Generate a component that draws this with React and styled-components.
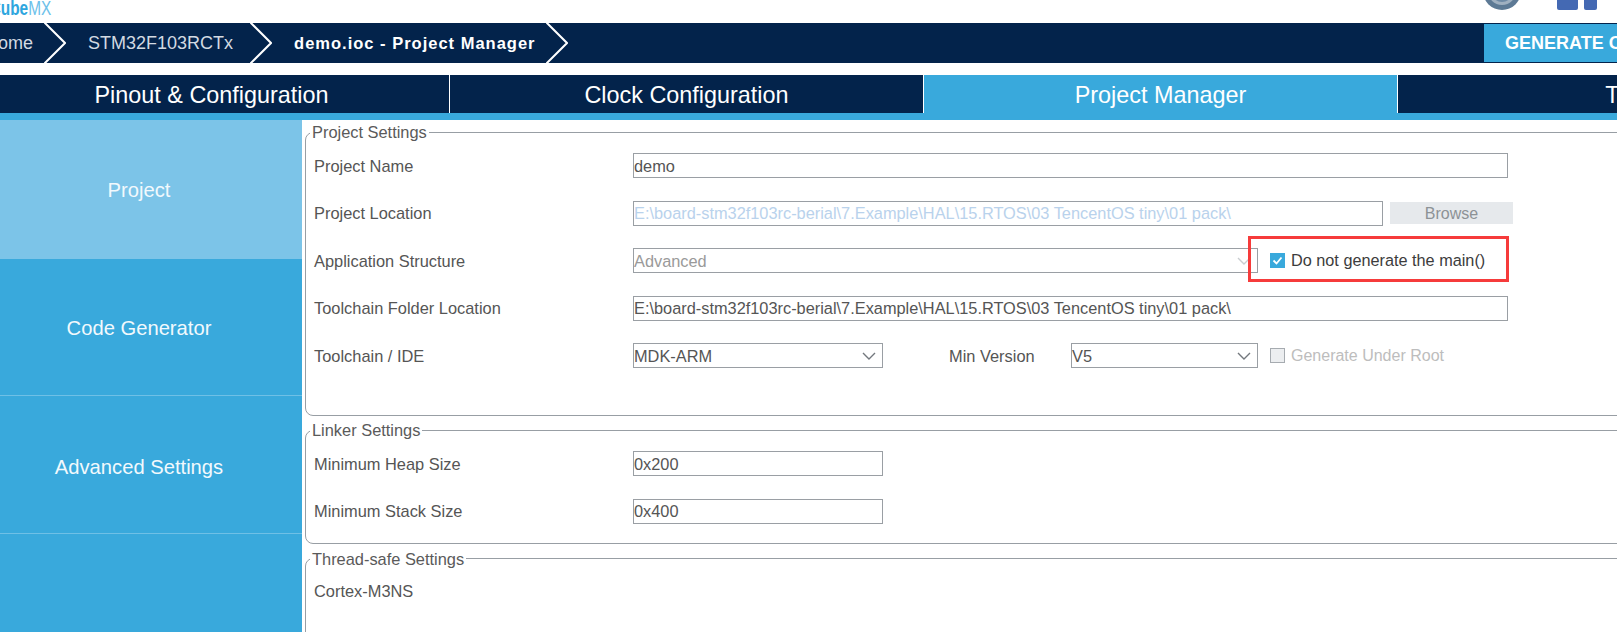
import React from 'react'
import styled, { createGlobalStyle } from 'styled-components'

const Global = createGlobalStyle`
  html, body {
    margin: 0;
    padding: 0;
    background: #fff;
    overflow: hidden;
  }
  body {
    font-family: "Liberation Sans", Arial, sans-serif;
  }
`

const Page = styled.div`
  width: 1617px;
  height: 632px;
  overflow: hidden;
  display: flex;
  flex-direction: column;
`

const TopBand = styled.div`
  height: 23px;
  display: flex;
  justify-content: space-between;
  align-items: flex-start;
  flex-shrink: 0;
`

const Logo = styled.div`
  font-size: 20px;
  line-height: 17px;
  color: #6cc1ea;
  white-space: nowrap;
  margin-left: -60px;
  transform: scaleX(0.77);
  transform-origin: left center;

  b {
    color: #2ea6de;
  }
`

const Marks = styled.div`
  display: flex;
  gap: 36px;
  margin-right: 20px;
`

const CrumbBar = styled.div`
  height: 40px;
  background: #03234b;
  display: flex;
  align-items: center;
  flex-shrink: 0;
  overflow: hidden;
`

const Crumb = styled.div`
  display: flex;
  align-items: center;
  height: 40px;
  flex-shrink: 0;
  color: ${p => (p.$current ? '#fff' : '#d3dae2')};
  font-size: ${p => (p.$current ? '16.5px' : '18px')};
  font-weight: ${p => (p.$current ? 700 : 400)};
  letter-spacing: ${p => (p.$current ? '1px' : '0')};
  margin-left: ${p => p.$offset || 0}px;

  span {
    margin-right: ${p => p.$after}px;
    margin-left: 22px;
    white-space: nowrap;
  }
`

const Generate = styled.div`
  margin-left: auto;
  width: 112px;
  height: 38px;
  padding-left: 21px;
  flex-shrink: 0;
  background: #39a9dc;
  color: #fff;
  font-size: 18px;
  font-weight: 700;
  line-height: 38px;
  white-space: nowrap;
  overflow: hidden;
`

const TabBar = styled.div`
  margin-top: 12px;
  margin-left: -26px;
  display: flex;
  flex-shrink: 0;
  background: #39a9dc;
  padding-bottom: 7px;
`

const Tab = styled.div`
  width: ${p => p.$width || 474}px;
  height: 38px;
  flex-shrink: 0;
  box-sizing: border-box;
  border-right: 1px solid #fff;
  background: ${p => (p.$active ? '#39a9dc' : '#03234b')};
  color: #fff;
  font-size: 23.4px;
  line-height: 40px;
  text-align: center;
`

const Main = styled.div`
  flex: 1;
  display: flex;
  min-height: 0;
`

const Sidebar = styled.div`
  width: 326px;
  margin-left: -24px;
  flex-shrink: 0;
  background: #39a9dc;
`

const SideItem = styled.div`
  height: ${p => p.$height}px;
  box-sizing: border-box;
  padding-top: ${p => p.$nudge || 2}px;
  display: flex;
  align-items: center;
  justify-content: center;
  background: ${p => (p.$active ? '#7cc4e8' : 'transparent')};
  border-top: ${p => (p.$line ? '1px solid #6fc0e6' : 'none')};
  color: #f2f9fd;
  font-size: 20.2px;
`

const Content = styled.div`
  flex: 1;
  min-width: 0;
  padding-left: 3px;
  overflow: hidden;
`

const Group = styled.fieldset`
  margin: ${p => p.$top}px -20px 0 0;
  padding: ${p => p.$padTop}px 0 ${p => p.$padBottom}px 8px;
  border: 1px solid #989ea4;
  border-radius: 8px 0 0 8px;
  min-width: 0;

  legend {
    margin-left: -4px;
    padding: 0 2px;
    font-size: 16.4px;
    line-height: 16px;
    color: #5a5a5a;
  }
`

const Row = styled.div`
  display: flex;
  align-items: center;
  height: 25px;
  margin-bottom: ${p => (p.$last ? 0 : 22.5)}px;
`

const Label = styled.div`
  width: ${p => p.$width || 319}px;
  margin-left: ${p => p.$offset || 0}px;
  padding-top: 1px;
  flex-shrink: 0;
  font-size: 16.4px;
  color: #555;
  white-space: nowrap;
`

const Field = styled.div`
  width: ${p => p.$width}px;
  height: 25px;
  box-sizing: border-box;
  flex-shrink: 0;
  display: flex;
  align-items: center;
  justify-content: space-between;
  padding: 1px 6px 0 0;
  border: 1px solid #9a9fa4;
  background: #fff;
  font-size: 16.35px;
  color: ${p => p.$tone || '#555'};
  white-space: nowrap;
  overflow: hidden;
`

const Browse = styled.div`
  width: 123px;
  height: 22px;
  margin-left: 7px;
  background: #e6e9ec;
  color: #8d9296;
  font-size: 16px;
  line-height: 23px;
  text-align: center;
`

const CheckItem = styled.div`
  position: relative;
  display: flex;
  align-items: center;
  gap: 6px;
  margin-left: 12px;
  font-size: ${p => (p.$disabled ? '16px' : '16.25px')};
  color: ${p => (p.$disabled ? '#bdbdbd' : '#3c3c3c')};
  white-space: nowrap;
`

const Box = styled.div`
  width: 15px;
  height: 15px;
  box-sizing: border-box;
  display: flex;
  align-items: center;
  justify-content: center;
  background: ${p => (p.$checked ? '#39a9dc' : '#eceef0')};
  border: ${p => (p.$checked ? 'none' : '1px solid #a6abb0')};
`

// annotation someone drew on the screenshot
const RedMark = styled.div`
  position: absolute;
  left: -22px;
  top: -15px;
  width: 261px;
  height: 46px;
  box-sizing: border-box;
  border: 3px solid #f63b3b;
  pointer-events: none;
`

const Chevron = () => (
  <svg width="22" height="40" viewBox="0 0 22 40" style={{ flexShrink: 0 }}>
    <polyline points="0,-1 21,20 0,41" fill="none" stroke="#fff" strokeWidth="2" />
  </svg>
)

const Caret = ({ color = '#73787d' }) => (
  <svg width="14" height="8" viewBox="0 0 14 8">
    <polyline points="1,1 7,7 13,1" fill="none" stroke={color} strokeWidth="1.4" />
  </svg>
)

const Tick = () => (
  <svg width="15" height="15" viewBox="0 0 15 15">
    <polyline points="3.5,7.5 6.5,10.5 11.5,4.5" fill="none" stroke="#fff" strokeWidth="1.8" />
  </svg>
)

const Badge = () => (
  <svg width="38" height="11" viewBox="0 0 38 11">
    <circle cx="19" cy="-9" r="19" fill="#5d7a95" />
    <circle cx="19" cy="-9" r="14" fill="#9fb0c0" />
    <circle cx="19" cy="-9" r="11" fill="#6d8aa5" />
  </svg>
)

const Facebook = () => (
  <svg width="40" height="11" viewBox="0 0 40 11">
    <path d="M0 0H21V8a2 2 0 0 1-2 2H2a2 2 0 0 1-2-2Z" fill="#4469b3" />
    <path d="M27 0H40V8a2 2 0 0 1-2 2H29a2 2 0 0 1-2-2Z" fill="#4469b3" />
  </svg>
)

export default function App() {
  return (
    <Page>
      <Global />
      <TopBand>
        <Logo><b>STM32Cube</b>MX</Logo>
        <Marks>
          <Badge />
          <Facebook />
        </Marks>
      </TopBand>

      <CrumbBar>
        <Crumb $offset={-37} $after={11}><span>Home</span><Chevron /></Crumb>
        <Crumb $after={17}><span>STM32F103RCTx</span><Chevron /></Crumb>
        <Crumb $current $after={10}><span>demo.ioc - Project Manager</span><Chevron /></Crumb>
        <Generate>GENERATE CODE</Generate>
      </CrumbBar>

      <TabBar>
        <Tab $width={476}>Pinout &amp; Configuration</Tab>
        <Tab>Clock Configuration</Tab>
        <Tab $active>Project Manager</Tab>
        <Tab $width={470}>Tools</Tab>
      </TabBar>

      <Main>
        <Sidebar>
          <SideItem $height={139} $active>Project</SideItem>
          <SideItem $height={136}>Code Generator</SideItem>
          <SideItem $height={138} $line $nudge={6}>Advanced Settings</SideItem>
          <SideItem $height={99} $line />
        </Sidebar>

        <Content>
          <Group $top={4} $padTop={13} $padBottom={47}>
            <legend>Project Settings</legend>
            <Row>
              <Label>Project Name</Label>
              <Field $width={875}>demo</Field>
            </Row>
            <Row>
              <Label>Project Location</Label>
              <Field $width={750} $tone="#b9d2ec">E:\board-stm32f103rc-berial\7.Example\HAL\15.RTOS\03 TencentOS tiny\01 pack\</Field>
              <Browse>Browse</Browse>
            </Row>
            <Row>
              <Label>Application Structure</Label>
              <Field $width={625} $tone="#9a9a9a">Advanced<Caret color="#c9cdd0" /></Field>
              <CheckItem>
                <RedMark />
                <Box $checked><Tick /></Box>
                Do not generate the main()
              </CheckItem>
            </Row>
            <Row>
              <Label>Toolchain Folder Location</Label>
              <Field $width={875}>E:\board-stm32f103rc-berial\7.Example\HAL\15.RTOS\03 TencentOS tiny\01 pack\</Field>
            </Row>
            <Row $last>
              <Label>Toolchain / IDE</Label>
              <Field $width={250}>MDK-ARM<Caret /></Field>
              <Label $width={122} $offset={66}>Min Version</Label>
              <Field $width={187}>V5<Caret /></Field>
              <CheckItem $disabled>
                <Box />
                Generate Under Root
              </CheckItem>
            </Row>
          </Group>

          <Group $top={6} $padTop={13} $padBottom={19}>
            <legend>Linker Settings</legend>
            <Row>
              <Label>Minimum Heap Size</Label>
              <Field $width={250}>0x200</Field>
            </Row>
            <Row $last>
              <Label>Minimum Stack Size</Label>
              <Field $width={250}>0x400</Field>
            </Row>
          </Group>

          <Group $top={7} $padTop={12} $padBottom={60}>
            <legend>Thread-safe Settings</legend>
            <Row $last>
              <Label>Cortex-M3NS</Label>
            </Row>
          </Group>
        </Content>
      </Main>
    </Page>
  )
}
